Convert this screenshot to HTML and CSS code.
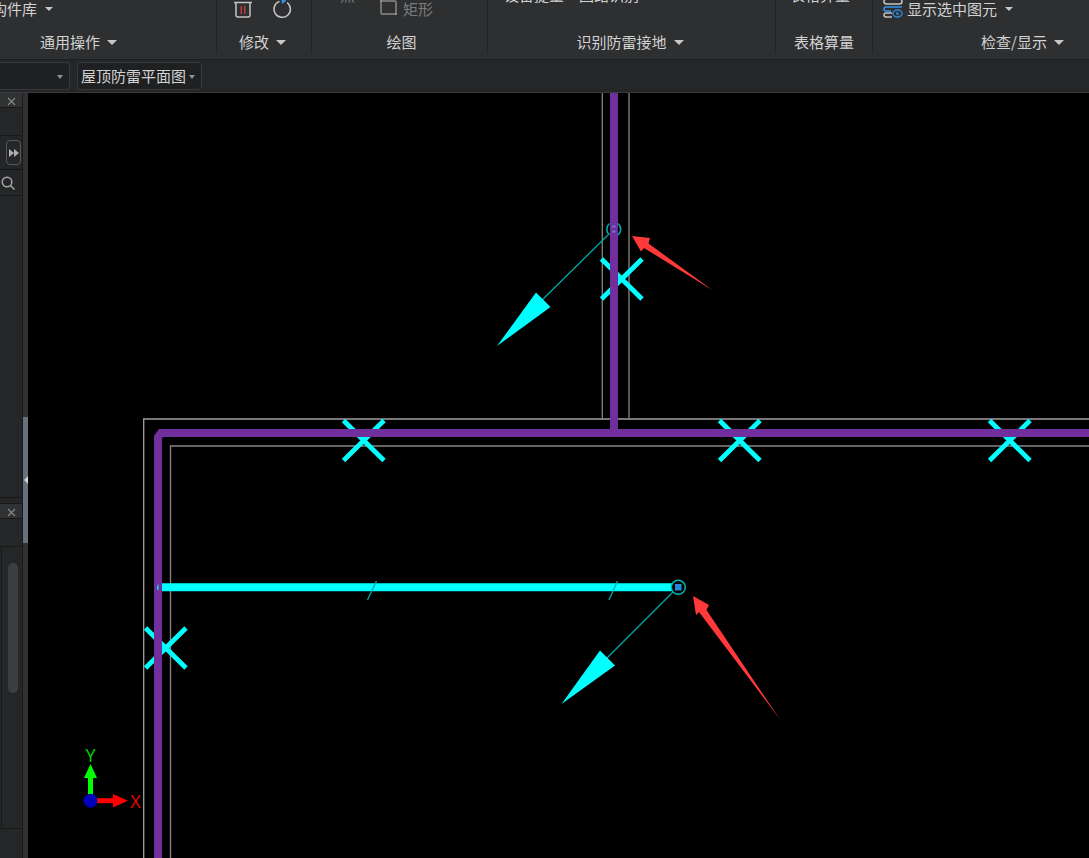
FILE: index.html
```html
<!DOCTYPE html>
<html lang="zh-CN">
<head>
<meta charset="utf-8">
<title>屋顶防雷平面图</title>
<link rel="stylesheet" href="styles.css">
</head>
<body>
<header class="ribbon">
  <section class="group group-common">
    <div class="tools"><button class="tool">构件库<i class="caret small"></i></button></div>
    <button class="group-label">通用操作<i class="caret"></i></button>
  </section>
  <section class="group group-edit">
    <div class="tools">
      <button class="tool" aria-label="删除"><svg width="20" height="20" viewBox="0 0 20 20" fill="none" stroke="#c4c4c4" stroke-width="1.5"><path d="M1 3.500h18M3 4v12q0 2 2 2h10q2 0 2-2V4"/><path d="M8.300 7v8M11.700 7v8" stroke="#c13a42"/></svg></button>
      <button class="tool" aria-label="旋转"><svg width="20" height="20" viewBox="0 0 20 20" fill="none" stroke="#c4c4c4" stroke-width="1.5"><path d="M7.500 2.400A8.200 8.200 0 1 0 15 3.500"/><path d="M9.500 0H13l1 2-4 3z" fill="#3492f0" stroke="none"/></svg></button>
    </div>
    <button class="group-label">修改<i class="caret"></i></button>
  </section>
  <section class="group group-draw">
    <div class="tools">
      <button class="tool tall muted">点</button>
      <button class="tool muted"><svg width="20" height="20" viewBox="0 0 20 20" fill="none" stroke="#8b8b8b" stroke-width="1.500"><rect x="2" y="2" width="15" height="13" rx="1"/><path d="M1 1h2v2H1zM16 14h2v2h-2z" fill="#8b8b8b" stroke="none"/></svg>矩形</button>
    </div>
    <span class="group-label">绘图</span>
  </section>
  <section class="group group-detect">
    <div class="tools">
      <button class="tool tall">设备提量</button>
      <button class="tool tall">回路识别</button>
    </div>
    <button class="group-label">识别防雷接地<i class="caret"></i></button>
  </section>
  <section class="group group-table">
    <div class="tools"><button class="tool tall">表格算量</button></div>
    <span class="group-label">表格算量</span>
  </section>
  <section class="group group-view">
    <div class="tools">
      <button class="tool"><svg width="20" height="20" viewBox="0 0 20 20" fill="none" stroke-width="1.500"><rect x="1" y="0" width="18" height="5" rx="2.500" stroke="#c4c4c4"/><path d="M19 8H3q-2 0-2 2t2 2h5" stroke="#3492f0"/><path d="M9 14H3q-2 0-2 2t2 2h6" stroke="#c4c4c4"/><ellipse cx="14.500" cy="14.500" rx="4.500" ry="3.500" stroke="#3187d8"/><path d="M14 13v2h2" stroke="#3187d8"/></svg>显示选中图元<i class="caret small"></i></button>
    </div>
    <button class="group-label">检查/显示<i class="caret"></i></button>
  </section>
</header>
<nav class="options">
  <span class="picker picker-floor"><select aria-label="楼层"><option></option></select></span>
  <span class="picker picker-drawing"><select aria-label="图纸"><option>屋顶防雷平面图</option></select></span>
</nav>
<main class="workspace">
  <aside class="side">
    <div class="panel panel-top">
      <div class="panel-head"><button aria-label="关闭"><svg width="9" height="9" viewBox="0 0 9 9"><path d="M1 1l7 7M8 1L1 8" stroke="#858585" stroke-width="1.300"/></svg></button></div>
      <div class="panel-tabs"></div>
      <div class="panel-more"><button class="more" aria-label="更多"><svg width="10" height="8" viewBox="0 0 10 8" fill="#b0b0b0"><path d="M0 0l5 4-5 4zM5 0l5 4-5 4z"/></svg></button></div>
      <div class="panel-search"><button aria-label="搜索"><svg width="14" height="14" viewBox="0 0 14 14" fill="none" stroke="#a8a8a8" stroke-width="1.400"><circle cx="6" cy="6" r="4.800"/><path d="M9.500 9.500l4 4"/></svg></button></div>
    </div>
    <div class="panel panel-bottom">
      <div class="panel-head"><button aria-label="关闭"><svg width="9" height="9" viewBox="0 0 9 9"><path d="M1 1l7 7M8 1L1 8" stroke="#858585" stroke-width="1.300"/></svg></button></div>
      <div class="panel-tabs"></div>
      <div class="panel-list"><div class="thumb"></div></div>
    </div>
  </aside>
  <div class="splitter"><button class="grip" aria-label="折叠"><svg width="4" height="8" viewBox="0 0 4 8"><path d="M4 0v8L0 4z" fill="#d0d4d8"/></svg></button></div>
  <svg class="drawing" role="img" aria-label="屋顶防雷平面图">
    <defs>
      <path id="cross" d="M-20.500-20L20 20M20-20L-20.500 20" stroke="#00ffff" stroke-width="4.800"/>
    </defs>
    <g transform="translate(-28 -93)" fill="none">
      <g stroke-width="1.300">
        <path d="M602.300 90V418.500M629 90V418.500" stroke="#858585"/>
        <path d="M143.700 2000V419H4000" stroke="#a0a0a0"/>
        <path d="M170.500 2000V446H4000" stroke="#858585"/>
      </g>
      <use href="#cross" x="622" y="279"/>
      <use href="#cross" x="364" y="440.500"/>
      <use href="#cross" x="740" y="440.500"/>
      <use href="#cross" x="1010" y="440.500"/>
      <use href="#cross" x="166" y="648"/>
      <path d="M160 587.300H675" stroke="#00ffff" stroke-width="8"/>
      <path d="M614 90V433" stroke="#702f9c" stroke-width="8"/>
      <path d="M158 2000V437L161 433H4000" stroke="#702f9c" stroke-width="8"/>
      <path d="M158.500 584q-3 3.500 0 7z" fill="#00ffff"/>
      <g stroke="#00a8a8" stroke-width="1.300">
        <path d="M608 235L540 302M673 592L605 660M376.500 581L367.500 600M617.500 581L609 600"/>
      </g>
      <path d="M609.500 223.500a7.500 7.500 0 0 0 0 11.500M618 223.500a7.500 7.500 0 0 1 0 11.500" stroke="#00a8a8" stroke-width="1.600"/>
      <path d="M612 225.500h3.500v2H612zM612 230.500h3.500v2H612z" fill="#6c78c8"/>
      <circle cx="678.300" cy="587.300" r="7" fill="#000" stroke="#00b4b4" stroke-width="1.500"/>
      <rect x="675" y="584" width="6.500" height="6.500" fill="#2489dc"/>
      <path d="M497 346L536 292.500L550.500 307zM561.500 704L600 650.500L615 665.500z" fill="#00ffff"/>
      <path d="M632 236L650 238L648.500 243.500L713 290.500L644 248L641 251.500zM693 596L709 605L706.500 610L780 719.500L699 612L696 615z" fill="#ff3939"/>
      <path d="M90.500 797V774" stroke="#00ff00" stroke-width="5"/>
      <path d="M90.500 764L97 778H84z" fill="#00ff00"/>
      <path d="M94 800.700H115" stroke="#f00" stroke-width="5"/>
      <path d="M128 800.700L113 794v13.500z" fill="#f00"/>
      <circle cx="90.500" cy="800.700" r="7" fill="#0000b8"/>
      <text class="axis" x="90.500" y="762" fill="#00d400">Y</text>
      <text class="axis" x="135.500" y="808" fill="#f00000">X</text>
    </g>
  </svg>
</main>
</body>
</html>
```

FILE: styles.css
```css
* { box-sizing: border-box; }
body {
  margin: 0;
  height: 100vh;
  display: flex;
  flex-direction: column;
  overflow: hidden;
  background: #252628;
  color: #d2d2d2;
  font: 15px/20px "Noto Sans CJK SC", sans-serif;
}
button, select { font: inherit; color: inherit; background: none; border: 0; padding: 0; margin: 0; }
button { display: flex; align-items: center; white-space: nowrap; }
svg { display: block; flex: none; }

.ribbon { display: flex; flex: none; height: 60px; background: #2e2f31; border-bottom: 1px solid #1d1e1f; }
.group { display: flex; flex: none; flex-direction: column; border-right: 1px solid #222325; height: 54px; overflow: hidden; }
.tools { display: flex; align-items: flex-start; height: 33px; margin-top: -1px; }
.tool { gap: 4px; height: 20px; }
.tall { margin-top: -14px; }
.muted { color: #7b7b7b; }
.group-label { display: flex; align-items: center; justify-content: center; gap: 7px; }
.caret { border: 5px solid transparent; border-top-color: #c8c8c8; border-bottom: 0; }
.caret.small { border-width: 4px; border-bottom: 0; margin-left: 4px; }
.group-common { width: 217px; }
.group-common .tools { margin-left: -8px; }
.group-common .group-label { justify-content: flex-start; padding-left: 40px; }
.group-edit { width: 95px; }
.group-edit .tools { gap: 19px; padding-left: 16px; }
.group-edit .group-label { padding-right: 3px; }
.group-draw { width: 176px; }
.group-draw .tools { gap: 24px; padding-left: 28px; }
.group-draw .group-label { padding-left: 4px; }
.group-detect { width: 288px; }
.group-detect .tools { gap: 15px; padding-left: 16px; }
.group-detect .group-label { padding-right: 3px; }
.group-table { width: 97px; }
.group-table .tools { padding-left: 14px; }
.group-view { flex: 1; border-right: 0; }
.group-view .tools { padding-left: 10px; }
.group-view .group-label { justify-content: flex-start; padding-left: 108px; }

.options { display: flex; flex: none; gap: 7px; height: 33px; padding: 2px 0; border-bottom: 1px solid #38393a; }
.picker { display: flex; position: relative; height: 28px; background: #1f2022; border: 1px solid #38393b; border-radius: 4px; }
.picker::after { content: ""; position: absolute; right: 6px; top: 12px; border: 3px solid transparent; border-top: 4px solid #929292; border-bottom: 0; pointer-events: none; }
.picker select { appearance: none; width: 100%; padding-left: 3px; outline: 0; }
.picker-floor { width: 70px; border-left: 0; border-radius: 0 4px 4px 0; }
.picker-drawing { width: 125px; }

.workspace { display: flex; flex: 1; min-height: 0; }
.side { display: flex; flex: none; flex-direction: column; width: 23px; border-right: 1px solid #19191a; }
.panel { display: flex; flex-direction: column; }
.panel-top { height: 405px; border-bottom: 1px solid #151516; }
.panel-bottom { flex: 1; margin-top: 5px; border-top: 1px solid #19191a; }
.panel-head { display: flex; justify-content: flex-end; height: 15px; padding: 2px 6px 0 0; background: #303133; border-bottom: 1px solid #19191a; }
.panel-tabs { height: 28px; border-bottom: 1px solid #19191a; }
.panel-more { display: flex; align-items: center; justify-content: flex-end; height: 34px; padding-right: 1px; border-bottom: 1px solid #151516; }
.more { justify-content: center; width: 15px; height: 25px; border: 1px solid #56575a; border-radius: 4px; }
.panel-search { display: flex; align-items: center; height: 26px; padding-left: 1px; border-bottom: 1px solid #19191a; }
.panel-list { flex: 1; display: flex; justify-content: flex-end; margin: 0 0 29px 1px; padding: 16px 4px 0 0; border-left: 1px solid #19191a; border-bottom: 1px solid #19191a; }
.thumb { width: 10px; height: 130px; border-radius: 5px; background: #3d3e40; }
.splitter { display: flex; flex: none; flex-direction: column; width: 5px; padding-top: 324px; background: #303133; }
.grip { justify-content: flex-end; height: 126px; background: #65717c; }
.drawing { flex: 1; min-width: 0; height: 100%; background: #000; }
.axis { font: 18px "Open Sans", sans-serif; text-anchor: middle; }
```
